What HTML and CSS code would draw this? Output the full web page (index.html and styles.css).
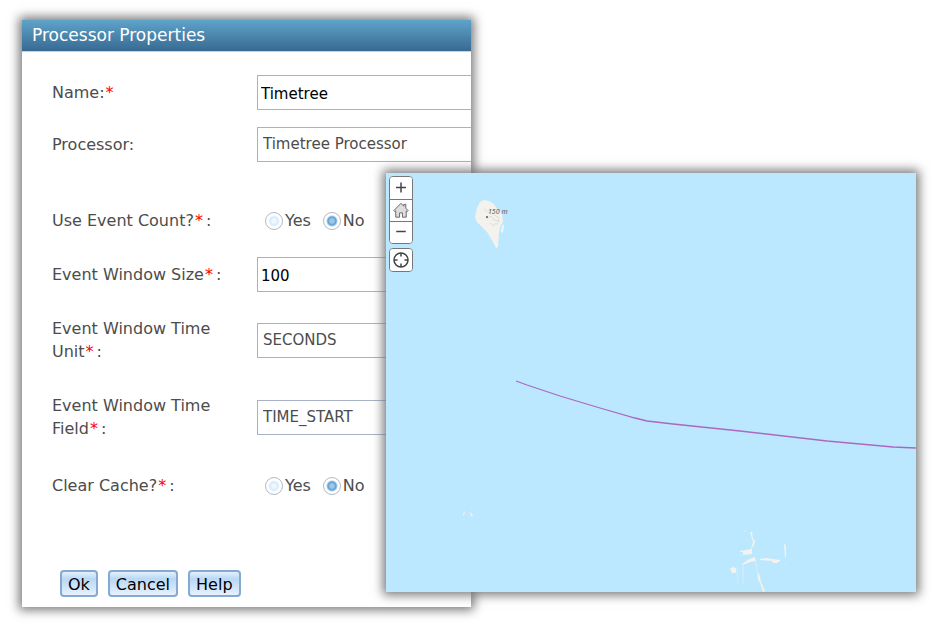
FILE: index.html
```html
<!DOCTYPE html>
<html lang="en">
<head>
<meta charset="utf-8">
<title>Processor Properties</title>
<link rel="stylesheet" href="styles.css">
</head>
<body>
<main class="stage">
  <section class="dialog">
    <h1 class="dialog-title">Processor Properties</h1>
    <form class="form">
      <div class="group">
        <div class="row">
          <label class="label" for="name">Name:<span class="req">*</span></label>
          <input class="field field-text" id="name" type="text" value="Timetree">
        </div>
        <div class="row">
          <label class="label" for="processor">Processor:</label>
          <select class="field" id="processor"><option>Timetree Processor</option></select>
        </div>
      </div>
      <div class="group group-window">
        <div class="row" role="radiogroup" aria-labelledby="count-label">
          <span class="label" id="count-label">Use Event Count?<span class="req">*</span>:</span>
          <div class="choices">
            <label class="choice"><input class="radio" type="radio" name="count">Yes</label>
            <label class="choice"><input class="radio" type="radio" name="count" checked>No</label>
          </div>
        </div>
        <div class="row">
          <label class="label" for="size">Event Window Size<span class="req">*</span>:</label>
          <input class="field field-text" id="size" type="text" value="100">
        </div>
        <div class="row">
          <label class="label" for="unit">Event Window Time Unit<span class="req">*</span>:</label>
          <select class="field" id="unit"><option>SECONDS</option></select>
        </div>
        <div class="row">
          <label class="label" for="timefield">Event Window Time Field<span class="req">*</span>:</label>
          <select class="field" id="timefield"><option>TIME_START</option></select>
        </div>
      </div>
      <div class="group">
        <div class="row" role="radiogroup" aria-labelledby="cache-label">
          <span class="label" id="cache-label">Clear Cache?<span class="req">*</span>:</span>
          <div class="choices">
            <label class="choice"><input class="radio" type="radio" name="cache">Yes</label>
            <label class="choice"><input class="radio" type="radio" name="cache" checked>No</label>
          </div>
        </div>
      </div>
      <div class="actions">
        <button class="btn" type="button">Ok</button>
        <button class="btn" type="button">Cancel</button>
        <button class="btn" type="button">Help</button>
      </div>
    </form>
  </section>

  <section class="map" aria-label="Map">
    <svg class="map-canvas" viewBox="0 0 530 419" preserveAspectRatio="xMinYMin slice">
      <g fill="#f3f2ed">
        <path d="M91 35l3-6 4-2 5 1 5 3 3 5 5 4 1 9-3 5-1 6-1 14-2 1-3-6-6-10-6-6-4-4-2-5z"/>
        <path d="M116 53l2-2 0 3-1 5-2 1 0-4z"/>
        <path d="M77 342l1-3 1-1-1 5zM84 339l3 3-1 2-2-3zM85 335l2 1-1 0z"/>
        <path d="M364 359l2 0 1 7 2 1-1 5-2 3 0 6-9 1 0-3-3 0 0-1 6-1 5-1 2-7z"/>
        <path d="M358 358l2-1-1 2zM354 383l4-2-3 2zM356 391l7-5 6-2 1 4-6 1-7 3zM344 396l3-2 3 1 0 5-4 0z"/>
        <path d="M374 386l6-1 14 2 0 1-3 2-4 0-1-2-12-1zM398 370l2 3 0 10-1 2z"/>
        <path d="M371 398l3 5 1 6 4 9-2 1-3-9-2-4z"/>
      </g>
      <g fill="none" stroke="#d8edf6">
        <path d="M351 395l1 15M357 391v20M370 389l1 9M399 391l1-2"/>
      </g>
      <g fill="none" stroke="#dedfda">
        <path d="M98 36l4 3 5 1M100 46l5-3 3 4 6 1M104 50l4 3 2-3M108 42l5 3-2 7"/>
      </g>
      <circle cx="101" cy="44" r="1" fill="#555"/>
      <text class="peak" x="102" y="41">150 m</text>
      <path d="M130 208l11 4 33 11 40 12 35 10 12 3 26 3 67 7 87 10 66 6 23 1" fill="none" stroke="#ae67c0" stroke-width="1.3"/>
    </svg>
    <div class="tools">
      <div class="toolbar">
        <button class="tool" type="button" aria-label="Zoom in"><svg viewBox="0 0 22 22"><path class="bold" d="M6 10.500h10M11 5.500v10"/></svg></button>
        <button class="tool" type="button" aria-label="Home"><svg viewBox="0 0 22 22"><path class="home" d="M3.500 11L11 3.500l3 3V4.500h2v4l2.500 2.500-1 1.200-1-.8V18h-4v-4.500h-3V18h-4v-6.600l-1 .8z"/></svg></button>
        <button class="tool" type="button" aria-label="Zoom out"><svg viewBox="0 0 22 22"><path class="bold" d="M6 10h10"/></svg></button>
      </div>
      <div class="toolbar">
        <button class="tool" type="button" aria-label="Locate"><svg viewBox="0 0 22 22"><circle class="bold" cx="11" cy="11" r="7"/><path class="bold" d="M11 4v3.500M11 14.500V18M4 11h3.500M14.500 11H18"/></svg></button>
      </div>
    </div>
  </section>
</main>
</body>
</html>
```
FILE: styles.css
```css
* { box-sizing: border-box; }

body {
  margin: 0;
  background: #fff;
  color: #4c4c4c;
  font-family: "DejaVu Sans", sans-serif;
  font-size: 16px;
  line-height: 23px;
}

.stage {
  display: grid;
  grid-template-columns: 364fr 85fr 445fr;
  grid-template-rows: 153px auto 15px;
  padding: 20px 15px 20px 22px;
}

.dialog {
  grid-area: 1 / 1 / 4 / 3;
  background: #fff;
  box-shadow: 0 0 10px 3px #777;
}

.dialog-title {
  margin: 0;
  padding: 4px 10px;
  border-bottom: 1px solid #c0d4e4;
  background: linear-gradient(#5fa3c9, #386a92);
  color: #fff;
  font-size: 17px;
  font-weight: 400;
}

.form { padding: 29px 0 10px 30px; }

.group {
  display: grid;
  gap: 29px;
  margin-bottom: 53px;
}

.group-window {
  gap: 31px;
  margin-bottom: 34px;
}

.row {
  display: grid;
  grid-template-columns: 175px 1fr;
  column-gap: 30px;
  align-items: center;
}

.req {
  margin: 0 3px 0 1px;
  color: #f00;
}

.field {
  width: 100%;
  height: 35px;
  margin: -6px 0;
  padding: 0 5px;
  border: 1px solid #a9b1c4;
  border-right: 0;
  border-radius: 0;
  background: #fff;
  color: #4c4c4c;
  font: inherit;
  font-size: 15px;
  appearance: none;
}

.field-text {
  padding: 2px 3px 0;
  color: #000;
}

.choices {
  display: flex;
  gap: 12px;
  padding-left: 8px;
}

.choice {
  display: flex;
  align-items: center;
  gap: 2px;
}

.radio {
  width: 18px;
  height: 18px;
  margin: 0;
  border: 1px solid #b0b8c8;
  border-radius: 50%;
  background: radial-gradient(circle, #eef7fd 0 2px, #d5eafa 4px, #fff 6px);
  appearance: none;
}

.radio:checked { background: radial-gradient(circle, #9cc8e6 0 2px, #5b9fd0 4px, #fff 6px); }

.actions {
  display: flex;
  gap: 10px;
  padding-left: 8px;
  margin-top: 73px;
}

.btn {
  height: 27px;
  padding: 2px 6px 0;
  border: 2px solid #86a9cd;
  border-radius: 4px;
  background: linear-gradient(#e4f0fc, #b9d8f6 30%, #e6f1fd);
  color: #000;
  font: inherit;
  line-height: 20px;
}

.map {
  grid-area: 2 / 2 / 3 / 4;
  display: grid;
  position: relative;
  background: #bbe8ff;
  box-shadow: 0 0 10px 3px #777;
}

.map-canvas {
  position: absolute;
  width: 100%;
  height: 100%;
}

.peak {
  fill: #555;
  font: italic 7px "Noto Sans", sans-serif;
}

.tools {
  position: relative;
  display: grid;
  gap: 4px;
  align-content: start;
  justify-content: start;
  padding: 3px;
}

.toolbar {
  display: grid;
  overflow: hidden;
  border: 1px solid #777;
  border-radius: 4px;
  background: #fff;
}

.tool {
  width: 22px;
  height: 22px;
  padding: 0;
  border: 0;
  background: #fff;
}

.tool + .tool { border-top: 1px solid #777; }

.tool svg {
  display: block;
  width: 100%;
  height: 100%;
}

.bold {
  fill: none;
  stroke: #444;
  stroke-width: 1.5;
}

.home {
  fill: #ddd;
  stroke: #666;
}
```
